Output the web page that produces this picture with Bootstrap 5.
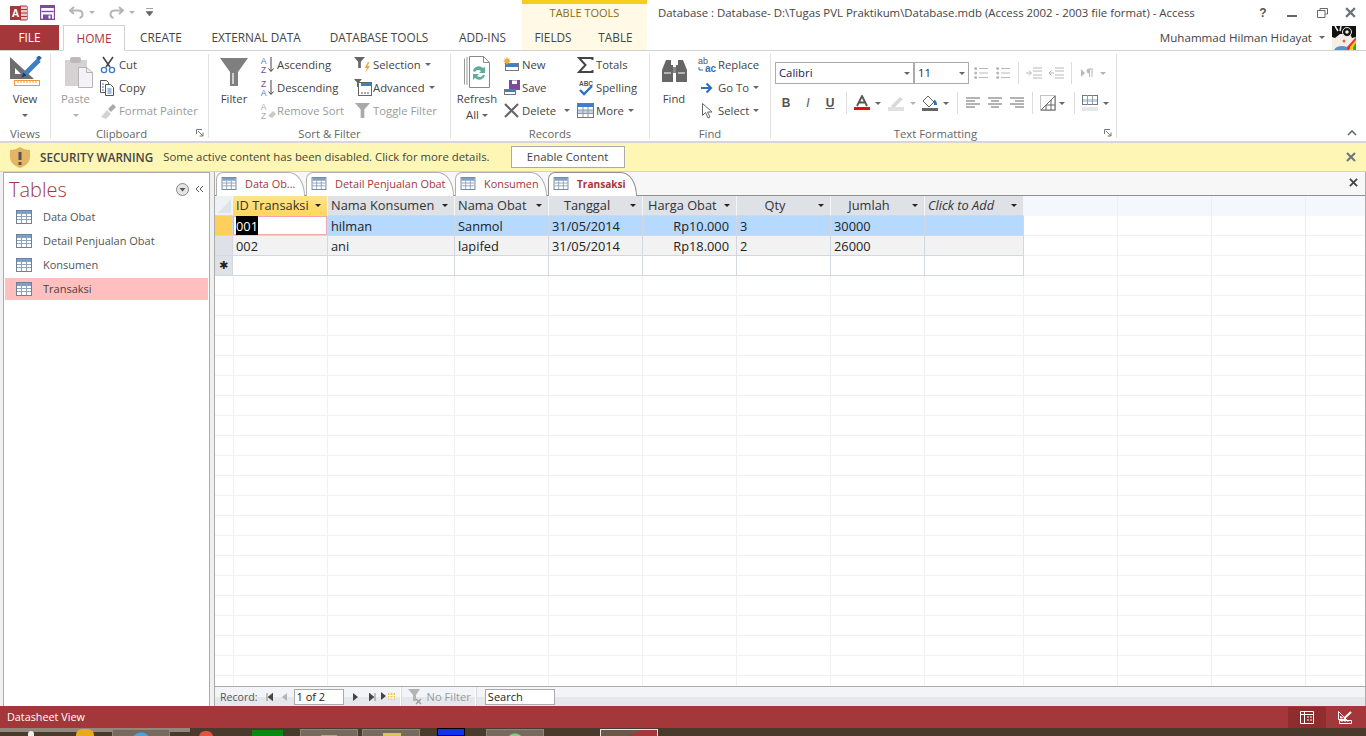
<!DOCTYPE html>
<html lang="en">
<head>
<meta charset="utf-8">
<title>Access</title>
<link href="https://cdn.jsdelivr.net/npm/bootstrap@5.3.0/dist/css/bootstrap.min.css" rel="stylesheet">
<style>
html,body{height:100%;margin:0;overflow:hidden;background:#fff}
body{font-family:"Open Sans","Liberation Sans",sans-serif;font-size:11.3px;color:#444;line-height:16px}
.app{width:1366px;height:736px}
svg{display:block;flex:0 0 auto}
/* header */
.hdr{height:50px;flex:0 0 50px}
.h-left{width:522px}
.qrow{height:25px;padding-left:10px}
.tabs{height:25px;flex-wrap:nowrap}
.tabs .nav-link,.ctx .nav-link{padding:0;height:25px;line-height:24px;text-align:center;color:#444;font-size:11.8px;border:0;border-radius:0;background:transparent}
.tabs .file{width:59px;background:#a4373a;color:#fff;margin-right:4px}
.tabs .home{width:62px;color:#a4373a;border:1px solid #d2d2d2;border-bottom:1px solid #fff;height:26px;background:#fff;position:relative;z-index:2}
.w72{width:72px}.w118{width:118px}.w128{width:128px}.w79{width:79px}.w62{width:62px}.w63{width:63px}
.ctx{width:125px;background:#fff9e5;border-top:4px solid #f5ce1b}
.ctx-t{height:21px;line-height:18px;text-align:center;color:#8a6d10;font-size:11px}
.h-right{width:719px}
.title{height:25px;padding-left:11px;font-size:11.4px;line-height:26px;white-space:nowrap}
.wins{margin-left:auto;height:25px;padding-right:10px}
.m19{margin-left:19px}.m20{margin-left:20px}.m17b{margin-left:17px}
.user{height:25px;font-size:11.6px;padding-right:10px}
/* ribbon */
.rib{height:93px;flex:0 0 93px;border-top:1px solid #d2d2d2;border-bottom:2px solid #d6d6d6;padding-top:3px;position:relative;background:#fff}
.rg{height:84px;border-right:1px solid #e1e1e1;display:flex;flex-direction:column}
.rg-b{height:71px;display:flex}
.rg-l{height:13px;line-height:17px;text-align:center;font-size:11.3px;color:#666;position:relative}
.rg-l.lp{padding-right:16px}
.launch{position:absolute;right:4px;top:4px}
.g1{width:51px}.g2{width:158px}.g3{width:242px}.g4{width:199px}.g5{width:121px}.g6{width:346px}
.big{display:flex;flex-direction:column;align-items:center;padding-top:2px}
.big .ico{height:35px;display:flex;align-items:flex-start}
.big .lb{height:16px;line-height:16px;margin-top:0;text-align:center;white-space:nowrap}
.big .lb2{height:16px;line-height:16px;display:flex;align-items:center;justify-content:center;gap:3px}
.bw50{width:50px}.bw49{width:49px}.bw52{width:52px}.bw48{width:48px}
.sh1{margin-left:2px}.sh5{margin-left:6px}.mt2{margin-top:2px}.mt4{margin-top:4px}
.smc{margin-top:-1px}
.ri{height:23px;display:flex;align-items:center;white-space:nowrap;gap:1px}
.ri>svg{width:18px;height:18px}
.cw95 .ri{gap:0}
.ri>svg.fnd{margin-right:1px}
.dis{color:#9a9a9a}
.car{display:inline-block;flex:0 0 auto;width:0;height:0;border-top:3px solid #666;border-left:3px solid transparent;border-right:3px solid transparent;margin-left:3px}
.car.g{border-top-color:#b4b4b4}
.cw95{width:95px}.cw74{width:74px}
.tf{padding:8px 0 0 4px}
.tf-r{display:flex;align-items:center;height:22px}
.tf-r2{margin-top:8px}
.combo{height:22px;border:1px solid #ababab;display:flex;align-items:center;justify-content:space-between;padding:0 3px;font-size:11.3px;color:#1a1a5c;background:#fff}
.c138{width:139px}.c55{width:55px;margin-left:0}
.sep{width:1px;height:22px;background:#dcdcdc;flex:0 0 1px}
.l3{margin-left:3px}.l5{margin-left:5px}.l6{margin-left:6px}.l7{margin-left:7px}.l8{margin-left:8px}.l9{margin-left:9px}.l11{margin-left:11px}.l12{margin-left:12px}.l14{margin-left:14px}
.car.l3{margin-left:3px}.car.l5{margin-left:5px}.car.l6{margin-left:6px}.car.l7{margin-left:7px}
.fb{font-family:"Liberation Sans",sans-serif;font-size:12px;line-height:16px;color:#555;width:10px;text-align:center}
.collapse-r{position:absolute;right:9px;bottom:5px}
/* security */
.sec{height:29px;flex:0 0 29px;background:#fdf6b5;border:0;border-bottom:1px solid #e0d88a;padding:0 0 0 10px;font-size:11.35px;color:#444;border-radius:0;margin:0}
.sec .s1{margin-left:10px;color:#444;font-weight:600;font-size:11.7px}
.sec .s2{margin-left:10px}
.sec .btn{height:22px;width:114px;margin-left:21px;padding:0;font-size:11.4px;line-height:20px;border:1px solid #ababab;border-radius:0;background:#fff;color:#444}
.sec .x{margin-left:auto;margin-right:10px}
/* main */
.main{height:534px;flex:0 0 534px;background:#f0f0f0}
.navp{width:207px;margin-left:3px;background:#fff;border:1px solid #ababab;border-bottom:0}
.navh{height:32px;padding-left:5px;position:relative}
.navh .t{font-size:20px;font-weight:300;color:#a4373a;line-height:34px;margin-top:2px}
.navh .c1{margin-left:auto;margin-right:6px}
.navh .c2{margin-right:5px}
.navp .list-group{margin-top:0;padding-left:1px;padding-right:1px}
.navp .list-group-item{height:24px;border:0;border-radius:0;padding:0 0 0 11px;display:flex;align-items:center;gap:11px;font-size:11px;color:#555;background:transparent}
.navp .list-group-item.active{background:#ffbfbf;color:#444;height:22px;margin-top:1px}
.right{width:1152px;margin-left:4px;border-left:1px solid #ababab;border-right:1px solid #ababab}
.dtabs{height:24px;flex:0 0 24px;background:#f7f7f7;border-bottom:1px solid #8f8f8f;padding-left:1px;position:relative}
.dt{height:24px;display:flex;align-items:center;padding:0 0 2px 4px;gap:8px;border:1px solid #b0b0b0;border-bottom:0;border-radius:7px 16px 0 0/7px 24px 0 0;background:#fff;color:#a4373a;font-size:10.9px;white-space:nowrap;margin-right:1px}
.dt.act{font-weight:700;font-size:10.1px;border-color:#8f8f8f;position:relative;z-index:1}
.d1{width:89px}.d2{width:148px}.d3{width:92px}.d4{width:89px}
.dtabs .x{margin-left:auto;margin-right:7px;margin-bottom:2px;align-self:center;color:#444}
.sheet{flex:1 1 auto;height:490px;position:relative;background-color:#fff;overflow:hidden;
 background-image:
  linear-gradient(#eceef3,#eceef3),linear-gradient(#eceef3,#eceef3),linear-gradient(#eceef3,#eceef3),
  linear-gradient(#f5f7fe,#f5f7fe),
  repeating-linear-gradient(to bottom,transparent 0,transparent 19px,#f1f1f1 19px,#f1f1f1 20px);
 background-size:1px 100%,1px 100%,1px 100%,100% 20px,100% 100%;
 background-position:902px 0,996px 0,1090px 0,0 0,0 0;
 background-repeat:no-repeat}
.colsb{position:absolute;top:0;left:0;width:809px;height:100%;
 background-image:linear-gradient(#f1f1f1,#f1f1f1),linear-gradient(#f1f1f1,#f1f1f1),linear-gradient(#f1f1f1,#f1f1f1),linear-gradient(#f1f1f1,#f1f1f1),linear-gradient(#f1f1f1,#f1f1f1),linear-gradient(#f1f1f1,#f1f1f1),linear-gradient(#f1f1f1,#f1f1f1),linear-gradient(#f1f1f1,#f1f1f1),linear-gradient(#f1f1f1,#f1f1f1);
 background-size:1px 100%;background-repeat:no-repeat;
 background-position:18px 0,112px 0,239px 0,333px 0,427px 0,521px 0,615px 0,709px 0,808px 0}
col.c0{width:18px}col.c1x{width:95px}col.c2x{width:127px}col.c3x{width:94px}col.c4x{width:99px}
.table.dg{position:relative;width:809px;table-layout:fixed;margin:0;border-collapse:separate;border-spacing:0;font-size:12.8px;color:#222;--bs-table-bg:transparent}
.table.dg>:not(caption)>*>*{padding:0 3px;height:20px;line-height:19px;border:0;border-right:1px solid #d3d8e0;border-bottom:1px solid #d3d8e0;white-space:nowrap;overflow:hidden;vertical-align:middle;box-shadow:none;background:transparent;color:#222}
.table.dg>tbody>tr>td{padding-top:2px;line-height:17px}
.table.dg>thead>tr>th{font-weight:400;background:#dee1e6;border-right-color:#f4f5f7;color:#333}
.dg th .w{display:flex;align-items:center;justify-content:space-between;padding-right:3px}
.dg th .car{border-top-color:#222}
.table.dg>thead>tr>th.cur{background:linear-gradient(#ffe48a,#ffd75e)}
.dg th.cn .w span:first-child{flex:1;text-align:center;padding-right:8px}
.dg th .hg{margin-left:2px}
.table.dg>thead>tr>th.corner{background:#eef1f6;padding:0}
.table.dg>tbody>tr.r1>td{background:#b5d9ff}
.table.dg>tbody>tr.r2>td{background:#f2f2f2}
.table.dg>tbody>tr.r3>td{background:#fff}
.table.dg>tbody>tr>td.sel{background:#dee1e6;padding:0;text-align:center;font-family:"DejaVu Sans",sans-serif;font-size:11px}
.table.dg>tbody>tr>td.sel.on{background:#ffcf5c}
.table.dg>tbody>tr>td.curc{background:#fff;box-shadow:inset 0 0 0 1px #f5a7ab}
.hi{background:#000;color:#fff;padding:1px 0}
.table.dg>tbody>tr>td.tr{text-align:right;padding-right:7px}
.rec{height:20px;flex:0 0 20px;border-top:1px solid #ababab;background:linear-gradient(#f3f4f7 0,#f3f4f7 50%,#e6e7eb 50%,#e6e7eb 100%);padding-left:5px;font-size:10.6px;color:#555}
.rec .box{height:16px;background:#fff;border:1px solid #ababab;line-height:14px;padding-left:2px;color:#222;font-size:11px}
.b50{width:50px;margin-left:7px}
.b70{width:70px;margin-left:8px}
.recsep{width:1px;height:19px;background:#fff;margin-left:4px;border-right:1px solid #d8d8d8;flex:0 0 2px}
.l4{margin-left:4px}
.rec .nf{font-size:11.2px}
/* status */
.status{height:22px;flex:0 0 22px;background:#a4373a;color:#fff;padding-left:7px;font-size:10.8px}
.status .sb{height:21px;width:38px;display:flex;align-items:center;justify-content:center}
.status .sb.on{background:#8e2c2e;margin-left:auto}
.status .sb.last{margin-right:2px}
.tbar{height:8px;flex:0 0 8px;background:#4a3a2c linear-gradient(#94877b,#94877b) no-repeat 0 0/190px 4px;overflow:hidden;display:flex}
.tk{height:12px;flex:0 0 auto;margin-top:1px;background-repeat:no-repeat}
.tk.b{width:58px;background-color:#766a5e;border:1px solid #8f8579}
.tk.w{width:58px;background-color:#6a584b;border:1px solid #e8e6e4}
.ti{height:8px;margin-top:3px;border-radius:6px 6px 0 0}
.t1{width:6px;background:#eee;margin-left:28px}
.t2{width:18px;background:#e7a91f;margin-left:42px;margin-top:1px}
.t3{margin-left:18px;background-image:radial-gradient(circle at 28px 12px,#4aa3e0 0,#4aa3e0 9px,transparent 10px)}
.t4{width:14px;background:#e5523e;margin-left:29px}
.t5{width:31px;background:#0a8a0a;border-radius:0;margin-left:39px;margin-top:2px}
.m18{margin-left:17px;background-image:linear-gradient(#b9a97a,#b9a97a);background-size:16px 8px;background-position:20px 5px}
.m4{margin-left:4px;background-image:linear-gradient(#dcc557,#dcc557);background-size:18px 8px;background-position:20px 3px}
.t6{width:28px;background:#1133ee;border:1px solid #000;border-radius:0;margin-top:0;margin-left:17px}
.t7{margin-left:21px;background-image:radial-gradient(circle at 28px 12px,#86cf86 0,#86cf86 8px,transparent 9px)}
.t8{margin-left:56px;background-image:linear-gradient(160deg,transparent 50%,#a4373a 51%)}
</style>
</head>
<body>
<svg width="0" height="0" class="position-absolute">
<defs>
<symbol id="tbl" viewBox="0 0 16 14"><rect x=".5" y=".5" width="15" height="13" fill="#fff" stroke="#6f8196"/><rect x="1" y="1" width="14" height="3" fill="#7e9fc6"/><path d="M1 6.500h14M1 9.500h14M5.500 4v9M10.500 4v9" stroke="#8ea2ba" fill="none"/></symbol>
<symbol id="funnel" viewBox="0 0 14 14"><path d="M0 0h14L8.700 6v8H5.300V6z"/></symbol>
<symbol id="lst" viewBox="0 0 14 14"><g fill="none" stroke="#b8b8b8"><path d="M5 2.500h9M5 7h9M5 11.500h9"/></g><g fill="#b8b8b8"><circle cx="1.700" cy="2.500" r="1.500"/><circle cx="1.700" cy="7" r="1.500"/><circle cx="1.700" cy="11.500" r="1.500"/></g></symbol>
<symbol id="x" viewBox="0 0 10 10"><path d="M1 1l8 8M9 1l-8 8" stroke="currentColor" stroke-width="2" fill="none"/></symbol>
</defs>
</svg>
<div class="app d-flex flex-column">
 <header class="hdr d-flex">
  <div class="h-left">
   <div class="qrow d-flex align-items-center">
    <svg width="18" height="18" viewBox="0 0 18 18"><path d="M10 2h6c1 0 2 1 2 2v10c0 1-1 2-2 2h-6z" fill="#e9c9ca" stroke="#a4373a"/><path d="M11 5.500h6M11 9h6M11 12.500h6" stroke="#a4373a"/><rect x="0" y="2" width="11" height="14" fill="#a4373a"/><text x="5.500" y="13" text-anchor="middle" font-size="10.500" font-weight="700" fill="#fff" font-family="Liberation Sans">A</text></svg>
    <svg class="l12" width="15" height="15" viewBox="0 0 15 15"><path d="M.5.5h14v14H.5z" fill="#fff" stroke="#7b4a9e" stroke-width="1.400"/><rect x="1" y="1" width="13" height="2" fill="#7b4a9e"/><path d="M1.500 6.500h12" stroke="#7b4a9e" stroke-width="1.400"/><rect x="3" y="9.500" width="9" height="5" fill="#7b4a9e"/><rect x="8.500" y="10.500" width="2" height="3" fill="#fff"/></svg>
    <svg class="l14" width="15" height="13" viewBox="0 0 15 13"><path d="M5 1L1 4.500 5 8M1.500 4.500H9c6 0 5.500 6.500 1.500 7.500" fill="none" stroke="#b6b6b6" stroke-width="2"/></svg>
    <span class="car g l5"></span>
    <svg class="l14" width="15" height="13" viewBox="0 0 15 13"><path d="M10 1l4 3.500L10 8M13.500 4.500H6c-6 0-5.500 6.500-1.500 7.500" fill="none" stroke="#b6b6b6" stroke-width="2"/></svg>
    <span class="car g l5"></span>
    <svg class="l11" width="7" height="9" viewBox="0 0 7 9"><path d="M0 .5h7M0 3.500h7L3.500 8z" fill="#666" stroke="#666" stroke-width=".6"/></svg>
   </div>
   <nav class="nav tabs">
    <a class="nav-link file">FILE</a><a class="nav-link home">HOME</a><a class="nav-link w72">CREATE</a><a class="nav-link w118">EXTERNAL DATA</a><a class="nav-link w128">DATABASE TOOLS</a><a class="nav-link w79">ADD-INS</a>
   </nav>
  </div>
  <div class="ctx">
   <div class="ctx-t">TABLE TOOLS</div>
   <nav class="nav tabs"><a class="nav-link w62">FIELDS</a><a class="nav-link w63">TABLE</a></nav>
  </div>
  <div class="h-right">
   <div class="d-flex">
    <div class="title">Database : Database- D:\Tugas PVL Praktikum\Database.mdb (Access 2002 - 2003 file format) - Access</div>
    <div class="wins d-flex align-items-center">
     <span class="fb fw-bold">?</span>
     <svg class="m19" width="10" height="10" viewBox="0 0 10 10"><rect y="7" width="10" height="2" fill="#666"/></svg>
     <svg class="m20" width="11" height="10" viewBox="0 0 11 10"><path d="M3 2V.5h7.500V6H8.500M.5 2.500h7.500v7H.5z" fill="none" stroke="#666"/></svg>
     <svg class="m17b text-secondary" width="11" height="11"><use href="#x"/></svg>
    </div>
   </div>
   <div class="user d-flex align-items-center justify-content-end">
    <span>Muhammad Hilman Hidayat</span><span class="car l7"></span>
    <svg class="l7" width="24" height="24" viewBox="0 0 24 24"><rect width="24" height="24" fill="#f4eee4"/><path d="M0 0h24v11l-4 1-2-4H8L3 12 0 11z" fill="#111"/><path d="M3 0l3 5M9 0l-1 5" stroke="#f4eee4" stroke-width="1.500"/><circle cx="15" cy="6" r="4.500" fill="#111" stroke="#f4eee4"/><circle cx="15" cy="6" r="1.800" fill="#f4eee4"/><path d="M24 11l-9 10v3h2l7-8z" fill="#e33"/><path d="M24 14l-6 7v3h2l4-5z" fill="#fc0"/><path d="M24 17l-3 4v3h3z" fill="#3a3"/><path d="M2 24c2-4 8-5 13-3v3z" fill="#5a8fd0"/><circle cx="12" cy="15" r="1.500" fill="#c66"/></svg>
   </div>
  </div>
 </header>

 <section class="rib d-flex">
  <div class="rg g1">
   <div class="rg-b">
    <div class="big bw50">
     <div class="ico"><svg class="sh1" width="32" height="32" viewBox="0 0 32 32"><path fill-rule="evenodd" d="M0 1v22h24zM5 12v6h6z" fill="#6d6d6d"/><path d="M29 4L13 20" stroke="#3f7fc4" stroke-width="5" fill="none"/><path d="M13.500 16.500l3 3-5 2z" fill="#333"/><rect x="27" y="0" width="4" height="4" transform="rotate(45 29 2)" fill="#2a66a8"/><rect x="4.500" y="24.500" width="25" height="5" fill="#fff" stroke="#ed9a3c"/><path d="M8 25v2M11 25v2M14 25v2M17 25v2M20 25v2M23 25v2M26 25v2" stroke="#ed9a3c"/></svg></div>
     <div class="lb">View</div>
     <div class="lb2"><span class="car m-0"></span></div>
    </div>
   </div>
   <div class="rg-l">Views</div>
  </div>
  <div class="rg g2">
   <div class="rg-b">
    <div class="big bw49 dis">
     <div class="ico"><svg class="sh5" width="29" height="32" viewBox="0 0 29 32"><rect x="1" y="4" width="22" height="26" fill="#d6d2d4"/><rect x="6" y="1" width="11" height="6" rx="2" fill="#bdb8bb"/><path d="M14.500 11.500h8l6 5v15h-14z" fill="#f5f1f8" stroke="#b7b2b8"/><path d="M22.500 11.500v5h6" fill="none" stroke="#b7b2b8"/></svg></div>
     <div class="lb">Paste</div>
     <div class="lb2"><span class="car g m-0"></span></div>
    </div>
    <div class="smc">
     <div class="ri"><svg viewBox="1 0 18 18"><path d="M4 1l7 10M14 1L7 11" stroke="#444" stroke-width="1.600" fill="none"/><circle cx="5" cy="14" r="2.600" fill="none" stroke="#3f7fc4" stroke-width="1.400"/><circle cx="13" cy="14" r="2.600" fill="none" stroke="#3f7fc4" stroke-width="1.400"/></svg><span>Cut</span></div>
     <div class="ri"><svg viewBox="2 0 18 18"><path d="M2.500 1.500h6l2 2v10h-8z" fill="#fff" stroke="#555"/><path d="M7.500 5.500h5l3 3v8h-8z" fill="#fff" stroke="#555"/><path d="M4 5h2M4 8h2M4 11h2M9.500 10h4M9.500 12h4M9.500 14h4" stroke="#3f7fc4"/></svg><span>Copy</span></div>
     <div class="ri dis"><svg viewBox="0 0 18 18"><path d="M1 15l6-7 4 4-5 5z" fill="#d3d3d3"/><path d="M8 7l5-5 3 3-5 5z" fill="#a9a9a9"/></svg><span>Format Painter</span></div>
    </div>
   </div>
   <div class="rg-l lp">Clipboard<svg class="launch" width="8" height="8" viewBox="0 0 8 8"><path d="M.5 5V.5H6M2 2l5 5M7 3.500V7H3.500" fill="none" stroke="#777"/></svg></div>
  </div>
  <div class="rg g3">
   <div class="rg-b">
    <div class="big bw50">
     <div class="ico"><svg class="mt2" width="28" height="28" viewBox="0 0 28 28"><path d="M0 0h28L18 14v14h-8V14z" fill="#7f7f7f"/><path d="M13 15v11" fill="none" stroke="#e4e4e4" stroke-width="1.600"/></svg></div>
     <div class="lb">Filter</div>
    </div>
    <div class="cw95 smc">
     <div class="ri"><svg viewBox="0 0 18 18"><text x="4.500" y="8" text-anchor="middle" font-size="8.500" fill="#3f7fc4" font-family="Liberation Sans">A</text><text x="4.500" y="16.500" text-anchor="middle" font-size="8.500" fill="#7b4a9e" font-family="Liberation Sans">Z</text><path d="M12 1v14M9.500 12.500l2.500 3 2.500-3" stroke="#444" fill="none"/></svg><span>Ascending</span></div>
     <div class="ri"><svg viewBox="0 0 18 18"><text x="4.500" y="8" text-anchor="middle" font-size="8.500" fill="#7b4a9e" font-family="Liberation Sans">Z</text><text x="4.500" y="16.500" text-anchor="middle" font-size="8.500" fill="#3f7fc4" font-family="Liberation Sans">A</text><path d="M12 1v14M9.500 12.500l2.500 3 2.500-3" stroke="#444" fill="none"/></svg><span>Descending</span></div>
     <div class="ri dis"><svg viewBox="0 0 18 18"><text x="4.500" y="8" text-anchor="middle" font-size="8.500" fill="#aaa" font-family="Liberation Sans">A</text><text x="4.500" y="16.500" text-anchor="middle" font-size="8.500" fill="#aaa" font-family="Liberation Sans">Z</text><path d="M9 14l5-5 3 3-4 4z" fill="#c8c8c8"/></svg><span>Remove Sort</span></div>
    </div>
    <div class="smc">
     <div class="ri"><svg viewBox="0 0 18 18" fill="#666"><use href="#funnel" width="11" height="11" y="1"/><path d="M14 6l-3.500 6H13l-2 5 5-7h-2.500l2-4z" fill="#efab3c"/></svg><span>Selection</span><span class="car"></span></div>
     <div class="ri"><svg viewBox="0 0 18 18" fill="#666"><rect x="4.500" y="3.500" width="13" height="13" fill="#fff" stroke="#666"/><rect x="7" y="4" width="10" height="3" fill="#3f7fc4"/><use href="#funnel" width="8" height="8" y="0"/><path d="M7 14h2M10 14h2M13 14h2" stroke="#555"/></svg><span>Advanced</span><span class="car"></span></div>
     <div class="ri dis"><svg viewBox="0 0 18 18" fill="#a9a9a9"><use href="#funnel" width="15" height="15" x="1" y="1"/></svg><span>Toggle Filter</span></div>
    </div>
   </div>
   <div class="rg-l">Sort &amp; Filter</div>
  </div>
  <div class="rg g4">
   <div class="rg-b">
    <div class="big bw52">
     <div class="ico"><svg width="27" height="32" viewBox="0 0 27 32"><path d="M.5 2.500v26M3 1v28" stroke="#999" fill="none"/><path d="M5.500 .5h14l6 6v25h-20z" fill="#fff" stroke="#8a8a8a"/><path d="M19.500 .5v6h6" fill="none" stroke="#8a8a8a"/><path d="M9 15a6 6 0 0 1 10-3l2-1v6h-6l2-2a4 4 0 0 0-6 1zM21 19a6 6 0 0 1-10 3l-2 2v-6h6l-2 2a4 4 0 0 0 6-1z" fill="#5fae9c"/></svg></div>
     <div class="lb">Refresh</div>
     <div class="lb2"><span>All</span><span class="car m-0"></span></div>
    </div>
    <div class="cw74 smc">
     <div class="ri"><svg viewBox="0 0 18 18"><rect x="2.500" y="7.500" width="13" height="7" fill="#fff" stroke="#777"/><rect x="3" y="8" width="12" height="3" fill="#3f7fc4"/><path d="M4 1l1 2 2-1-1 2 2 1-2 1 1 2-2-1-1 2-1-2-2 1 1-2-2-1 2-1-1-2 2 1z" fill="#efab3c"/></svg><span>New</span></div>
     <div class="ri"><svg viewBox="0 0 18 18"><rect x="6" y="1" width="11" height="10" fill="#7b4a9e"/><rect x="9" y="1.500" width="5" height="3.500" fill="#fff"/><rect x="1.500" y="10.500" width="11" height="5" fill="#fff" stroke="#777"/><rect x="2" y="11" width="10" height="2" fill="#3f7fc4"/></svg><span>Save</span></div>
     <div class="ri"><svg viewBox="0 0 18 18"><path d="M2 2l13 13M15 2L2 15" stroke="#666" stroke-width="2.200"/></svg><span>Delete</span><span class="car l7"></span></div>
    </div>
    <div class="smc">
     <div class="ri"><svg viewBox="0 0 18 18"><path d="M15.500 4V2H2l6.500 7L2 16h13.500v-2" fill="none" stroke="#444" stroke-width="2"/></svg><span>Totals</span></div>
     <div class="ri"><svg viewBox="0 0 18 18"><text x="9" y="6.500" text-anchor="middle" font-size="6.500" font-weight="700" fill="#555" font-family="Liberation Sans">ABC</text><path d="M3 11l4 4 8-8" fill="none" stroke="#2f72bd" stroke-width="2.400"/></svg><span>Spelling</span></div>
     <div class="ri"><svg viewBox="0 0 18 18"><rect x=".5" y="1.500" width="16" height="14" fill="#fff" stroke="#777"/><rect x="1" y="2" width="15" height="3" fill="#3f7fc4"/><rect x="1" y="8" width="15" height="3" fill="#bcd4ec"/><path d="M1 8h15M1 11.500h15M6 5v10M11 5v10" stroke="#999" fill="none"/></svg><span>More</span><span class="car"></span></div>
    </div>
   </div>
   <div class="rg-l">Records</div>
  </div>
  <div class="rg g5">
   <div class="rg-b">
    <div class="big bw48">
     <div class="ico"><svg class="mt4" width="27" height="24" viewBox="0 0 27 24"><path d="M5 0h5v5h2v17H1V10zM22 0h-5v5h-2v17h11V10z" fill="#666"/><path d="M12 7h3v6h-3z" fill="#888"/><path d="M3 13h7M17 13h7" stroke="#fff"/></svg></div>
     <div class="lb">Find</div>
    </div>
    <div class="smc">
     <div class="ri"><svg class="fnd" viewBox="0 0 18 18"><text x="0" y="8" font-size="9" fill="#555" font-family="Liberation Sans">ab</text><text x="7" y="16" font-size="10" fill="#2f72bd" font-weight="700" font-family="Liberation Sans">ac</text><path d="M1 11v3h4" fill="none" stroke="#2f72bd"/></svg><span>Replace</span></div>
     <div class="ri"><svg class="fnd" viewBox="0 0 18 18"><path d="M3 9h10M8.500 4.500L13 9l-4.500 4.500" fill="none" stroke="#2f72bd" stroke-width="2.200"/></svg><span>Go To</span><span class="car"></span></div>
     <div class="ri"><svg class="fnd" viewBox="0 0 18 18"><path d="M4.500 1.500v12l3-3 2.500 5.500 2-1-2.500-5H14z" fill="#fff" stroke="#666"/></svg><span>Select</span><span class="car"></span></div>
    </div>
   </div>
   <div class="rg-l">Find</div>
  </div>
  <div class="rg g6">
   <div class="rg-b tf d-block">
    <div class="tf-r">
     <div class="combo c138"><span>Calibri</span><span class="car m-0"></span></div>
     <div class="combo c55"><span>11</span><span class="car m-0"></span></div>
     <svg class="l5" width="14" height="14"><use href="#lst"/></svg>
     <svg class="l8" width="14" height="14"><use href="#lst"/></svg>
     <span class="sep l8"></span>
     <svg class="l7" width="16" height="12" viewBox="0 0 16 12"><path d="M7 1h9M7 4h9M7 8h9M7 11h9M0 6h5M3 3.500L5.500 6 3 8.500" fill="none" stroke="#b8b8b8"/></svg>
     <svg class="l6" width="16" height="12" viewBox="0 0 16 12"><path d="M7 1h9M7 4h9M7 8h9M7 11h9M6 6H1M3.500 3.500L1 6l2.500 2.500" fill="none" stroke="#b8b8b8"/></svg>
     <span class="sep l7"></span>
     <svg class="l9" width="12" height="10" viewBox="0 0 12 10"><path d="M0 1l4 4-4 4z" fill="#b8b8b8"/><path d="M8 1h4M8.500 1v8M11 1v8M8 1a2 2 0 0 0 0 4" stroke="#b8b8b8" fill="#b8b8b8"/></svg>
     <span class="car g l7"></span>
    </div>
    <div class="tf-r tf-r2">
     <span class="fb fw-bold l6">B</span>
     <span class="fb fst-italic l12">I</span>
     <span class="fb text-decoration-underline fw-bold l12">U</span>
     <span class="sep l11"></span>
     <svg class="l7" width="16" height="16" viewBox="0 0 16 16"><path d="M3 11L8 1l5 10M5 7.500h6" fill="none" stroke="#555" stroke-width="1.800"/><rect y="12" width="16" height="3" fill="#e01010"/></svg>
     <span class="car l5"></span>
     <svg class="l7" width="16" height="16" viewBox="0 0 16 16"><path d="M3 11l9-9 3 2-9 9z" fill="#d8d8d8"/><rect y="12" width="16" height="4" fill="#e0e0e0"/></svg>
     <span class="car g l6"></span>
     <svg class="l6" width="16" height="16" viewBox="0 0 16 16"><path d="M6 1l6 6-5 5-6-6z" fill="#fff" stroke="#666"/><path d="M12 5c2 0 3 2 3 5h-3z" fill="#2f72bd"/><rect y="13" width="16" height="3" fill="#666"/></svg>
     <span class="car l5"></span>
     <span class="sep l8"></span>
     <svg class="l8" width="14" height="12" viewBox="0 0 14 12"><path d="M0 1h14M0 4h9M0 7h14M0 10h9" stroke="#666"/></svg>
     <svg class="l8" width="14" height="12" viewBox="0 0 14 12"><path d="M0 1h14M3 4h8M0 7h14M3 10h8" stroke="#666"/></svg>
     <svg class="l8" width="14" height="12" viewBox="0 0 14 12"><path d="M0 1h14M5 4h9M0 7h14M5 10h9" stroke="#666"/></svg>
     <span class="sep l8"></span>
     <svg class="l7" width="16" height="16" viewBox="0 0 16 16"><path d="M.5.5h15v15H.5z" fill="none" stroke="#888" stroke-dasharray="1 1"/><path d="M15 1L1 15h14zM6 10h9M11 5v10M6 10v5" fill="#fff" stroke="#666"/></svg>
     <span class="car l3"></span>
     <span class="sep l9"></span>
     <svg class="l7" width="16" height="16" viewBox="0 0 16 16"><rect x=".5" y=".5" width="15" height="9" fill="#fff" stroke="#777"/><rect x="1" y="4" width="14" height="3" fill="#bcd4ec"/><path d="M5.500 0v10M10.500 0v10" stroke="#999"/><rect y="12" width="16" height="4" fill="#e6e6e6"/></svg>
     <span class="car l5"></span>
    </div>
   </div>
   <div class="rg-l lp">Text Formatting<svg class="launch" width="8" height="8" viewBox="0 0 8 8"><path d="M.5 5V.5H6M2 2l5 5M7 3.500V7H3.500" fill="none" stroke="#777"/></svg></div>
  </div>
  <svg class="collapse-r" width="10" height="6" viewBox="0 0 10 6"><path d="M1 5l4-4 4 4" fill="none" stroke="#666" stroke-width="1.600"/></svg>
 </section>

 <div class="alert sec d-flex align-items-center" role="alert">
  <svg width="20" height="21" viewBox="0 0 20 21"><path d="M10 0c3 2 6 3 10 3v7c0 6-5 9-10 11C5 19 0 16 0 10V3c4 0 7-1 10-3z" fill="#e3b565"/><rect x="8.500" y="5" width="3" height="8" fill="#555"/><rect x="8.500" y="15" width="3" height="3" fill="#555"/></svg>
  <span class="s1">SECURITY WARNING</span>
  <span class="s2">Some active content has been disabled. Click for more details.</span>
  <button type="button" class="btn">Enable Content</button>
  <svg class="x text-secondary" width="10" height="10"><use href="#x"/></svg>
 </div>

 <div class="main d-flex">
  <aside class="navp">
   <div class="navh d-flex align-items-center">
    <span class="t">Tables</span>
    <svg class="c1" width="13" height="13" viewBox="0 0 13 13"><circle cx="6.500" cy="6.500" r="6" fill="#e4e4e4" stroke="#888"/><path d="M3.500 5h6l-3 3.500z" fill="#555"/></svg>
    <svg class="c2" width="9" height="8" viewBox="0 0 9 8"><path d="M4 1L1 4l3 3M8 1L5 4l3 3" fill="none" stroke="#555"/></svg>
   </div>
   <div class="list-group">
    <a class="list-group-item"><svg width="16" height="14"><use href="#tbl"/></svg>Data Obat</a>
    <a class="list-group-item"><svg width="16" height="14"><use href="#tbl"/></svg>Detail Penjualan Obat</a>
    <a class="list-group-item"><svg width="16" height="14"><use href="#tbl"/></svg>Konsumen</a>
    <a class="list-group-item active"><svg width="16" height="14"><use href="#tbl"/></svg>Transaksi</a>
   </div>
  </aside>
  <div class="right d-flex flex-column">
   <div class="dtabs d-flex">
    <div class="dt d1"><svg width="16" height="13"><use href="#tbl"/></svg>Data Ob...</div>
    <div class="dt d2"><svg width="16" height="13"><use href="#tbl"/></svg>Detail Penjualan Obat</div>
    <div class="dt d3"><svg width="16" height="13"><use href="#tbl"/></svg>Konsumen</div>
    <div class="dt d4 act"><svg width="16" height="13"><use href="#tbl"/></svg>Transaksi</div>
    <svg class="x" width="9" height="9"><use href="#x"/></svg>
   </div>
   <div class="sheet">
    <div class="colsb"></div>
    <table class="table dg">
     <colgroup><col class="c0"><col class="c1x"><col class="c2x"><col class="c3x"><col class="c3x"><col class="c3x"><col class="c3x"><col class="c3x"><col class="c4x"></colgroup>
     <thead><tr>
      <th class="corner"><svg width="18" height="19" viewBox="0 0 18 19"><path d="M16 3v14H3z" fill="#dfe3ea"/></svg></th>
      <th class="cur"><div class="w"><span>ID Transaksi</span><span class="car m-0"></span></div></th>
      <th><div class="w"><span>Nama Konsumen</span><span class="car m-0"></span></div></th>
      <th><div class="w"><span>Nama Obat</span><span class="car m-0"></span></div></th>
      <th class="cn"><div class="w"><span>Tanggal</span><span class="car m-0"></span></div></th>
      <th><div class="w"><span class="hg">Harga Obat</span><span class="car m-0"></span></div></th>
      <th class="cn"><div class="w"><span>Qty</span><span class="car m-0"></span></div></th>
      <th class="cn"><div class="w"><span>Jumlah</span><span class="car m-0"></span></div></th>
      <th><div class="w"><span class="fst-italic">Click to Add</span><span class="car m-0"></span></div></th>
     </tr></thead>
     <tbody>
      <tr class="r1"><td class="sel on"></td><td class="curc"><span class="hi">001</span></td><td>hilman</td><td>Sanmol</td><td>31/05/2014</td><td class="tr">Rp10.000</td><td>3</td><td>30000</td><td></td></tr>
      <tr class="r2"><td class="sel"></td><td>002</td><td>ani</td><td>lapifed</td><td>31/05/2014</td><td class="tr">Rp18.000</td><td>2</td><td>26000</td><td></td></tr>
      <tr class="r3"><td class="sel">✱</td><td></td><td></td><td></td><td></td><td></td><td></td><td></td><td></td></tr>
     </tbody>
    </table>
   </div>
   <div class="rec d-flex align-items-center">
    <span>Record:</span>
    <svg class="l8" width="7" height="8" viewBox="0 0 7 8"><path d="M1 0v8M7 0v8L2 4z" fill="#444" stroke="#444" stroke-width=".6"/></svg>
    <svg class="l9" width="5" height="8" viewBox="0 0 5 8"><path d="M5 0v8L0 4z" fill="#b4b4b4"/></svg>
    <div class="box b50">1 of 2</div>
    <svg class="l9" width="5" height="8" viewBox="0 0 5 8"><path d="M0 0v8l5-4z" fill="#444"/></svg>
    <svg class="l11" width="7" height="8" viewBox="0 0 7 8"><path d="M6 0v8M0 0v8l5-4z" fill="#444" stroke="#444" stroke-width=".6"/></svg>
    <svg class="l5" width="15" height="9" viewBox="0 0 15 9"><path d="M0 0v8l5-4z" fill="#444"/><rect x="7" y="1" width="7" height="7" fill="#e9c84a"/><path d="M9 1v7M12 1v7M7 3.500h7M7 6h7" stroke="#fff"/></svg>
    <span class="recsep"></span>
    <svg class="l6" width="15" height="16" viewBox="0 0 15 16"><path d="M0 0h12L8 6v6H5V6z" fill="#b4b4b4"/><path d="M8 10l5 5M13 10l-5 5" stroke="#999" stroke-width="1.300"/></svg>
    <span class="l4 dis nf">No Filter</span>
    <span class="recsep"></span>
    <div class="box b70">Search</div>
   </div>
  </div>
 </div>

 <footer class="status d-flex align-items-center">
  <span>Datasheet View</span>
  <div class="sb on"><svg width="14" height="13" viewBox="0 0 14 13"><path d="M.5.5h13v12H.5zM.5 3.500h13M4.500.5v12M7 6h2M10 6h2M7 9h2M10 9h2" fill="none" stroke="#fff"/></svg></div>
  <div class="sb last"><svg width="14" height="13" viewBox="0 0 14 13"><path d="M.5.5v8h8zM2.500 5v2h2z" fill="none" stroke="#fff"/><path d="M13 1L6 7.500" stroke="#fff" stroke-width="2"/><path d="M1.500 9.500h12v3h-12zM4 10v1M7 10v1M10 10v1" fill="none" stroke="#fff"/></svg></div>
 </footer>
 <div class="tbar">
  <span class="ti t1"></span><span class="ti t2"></span><span class="tk b t3"></span><span class="ti t4"></span><span class="ti t5"></span><span class="tk b m18"></span><span class="tk b m4"></span><span class="ti t6"></span><span class="tk b t7"></span><span class="tk w t8"></span>
 </div>
</div>
</body>
</html>
